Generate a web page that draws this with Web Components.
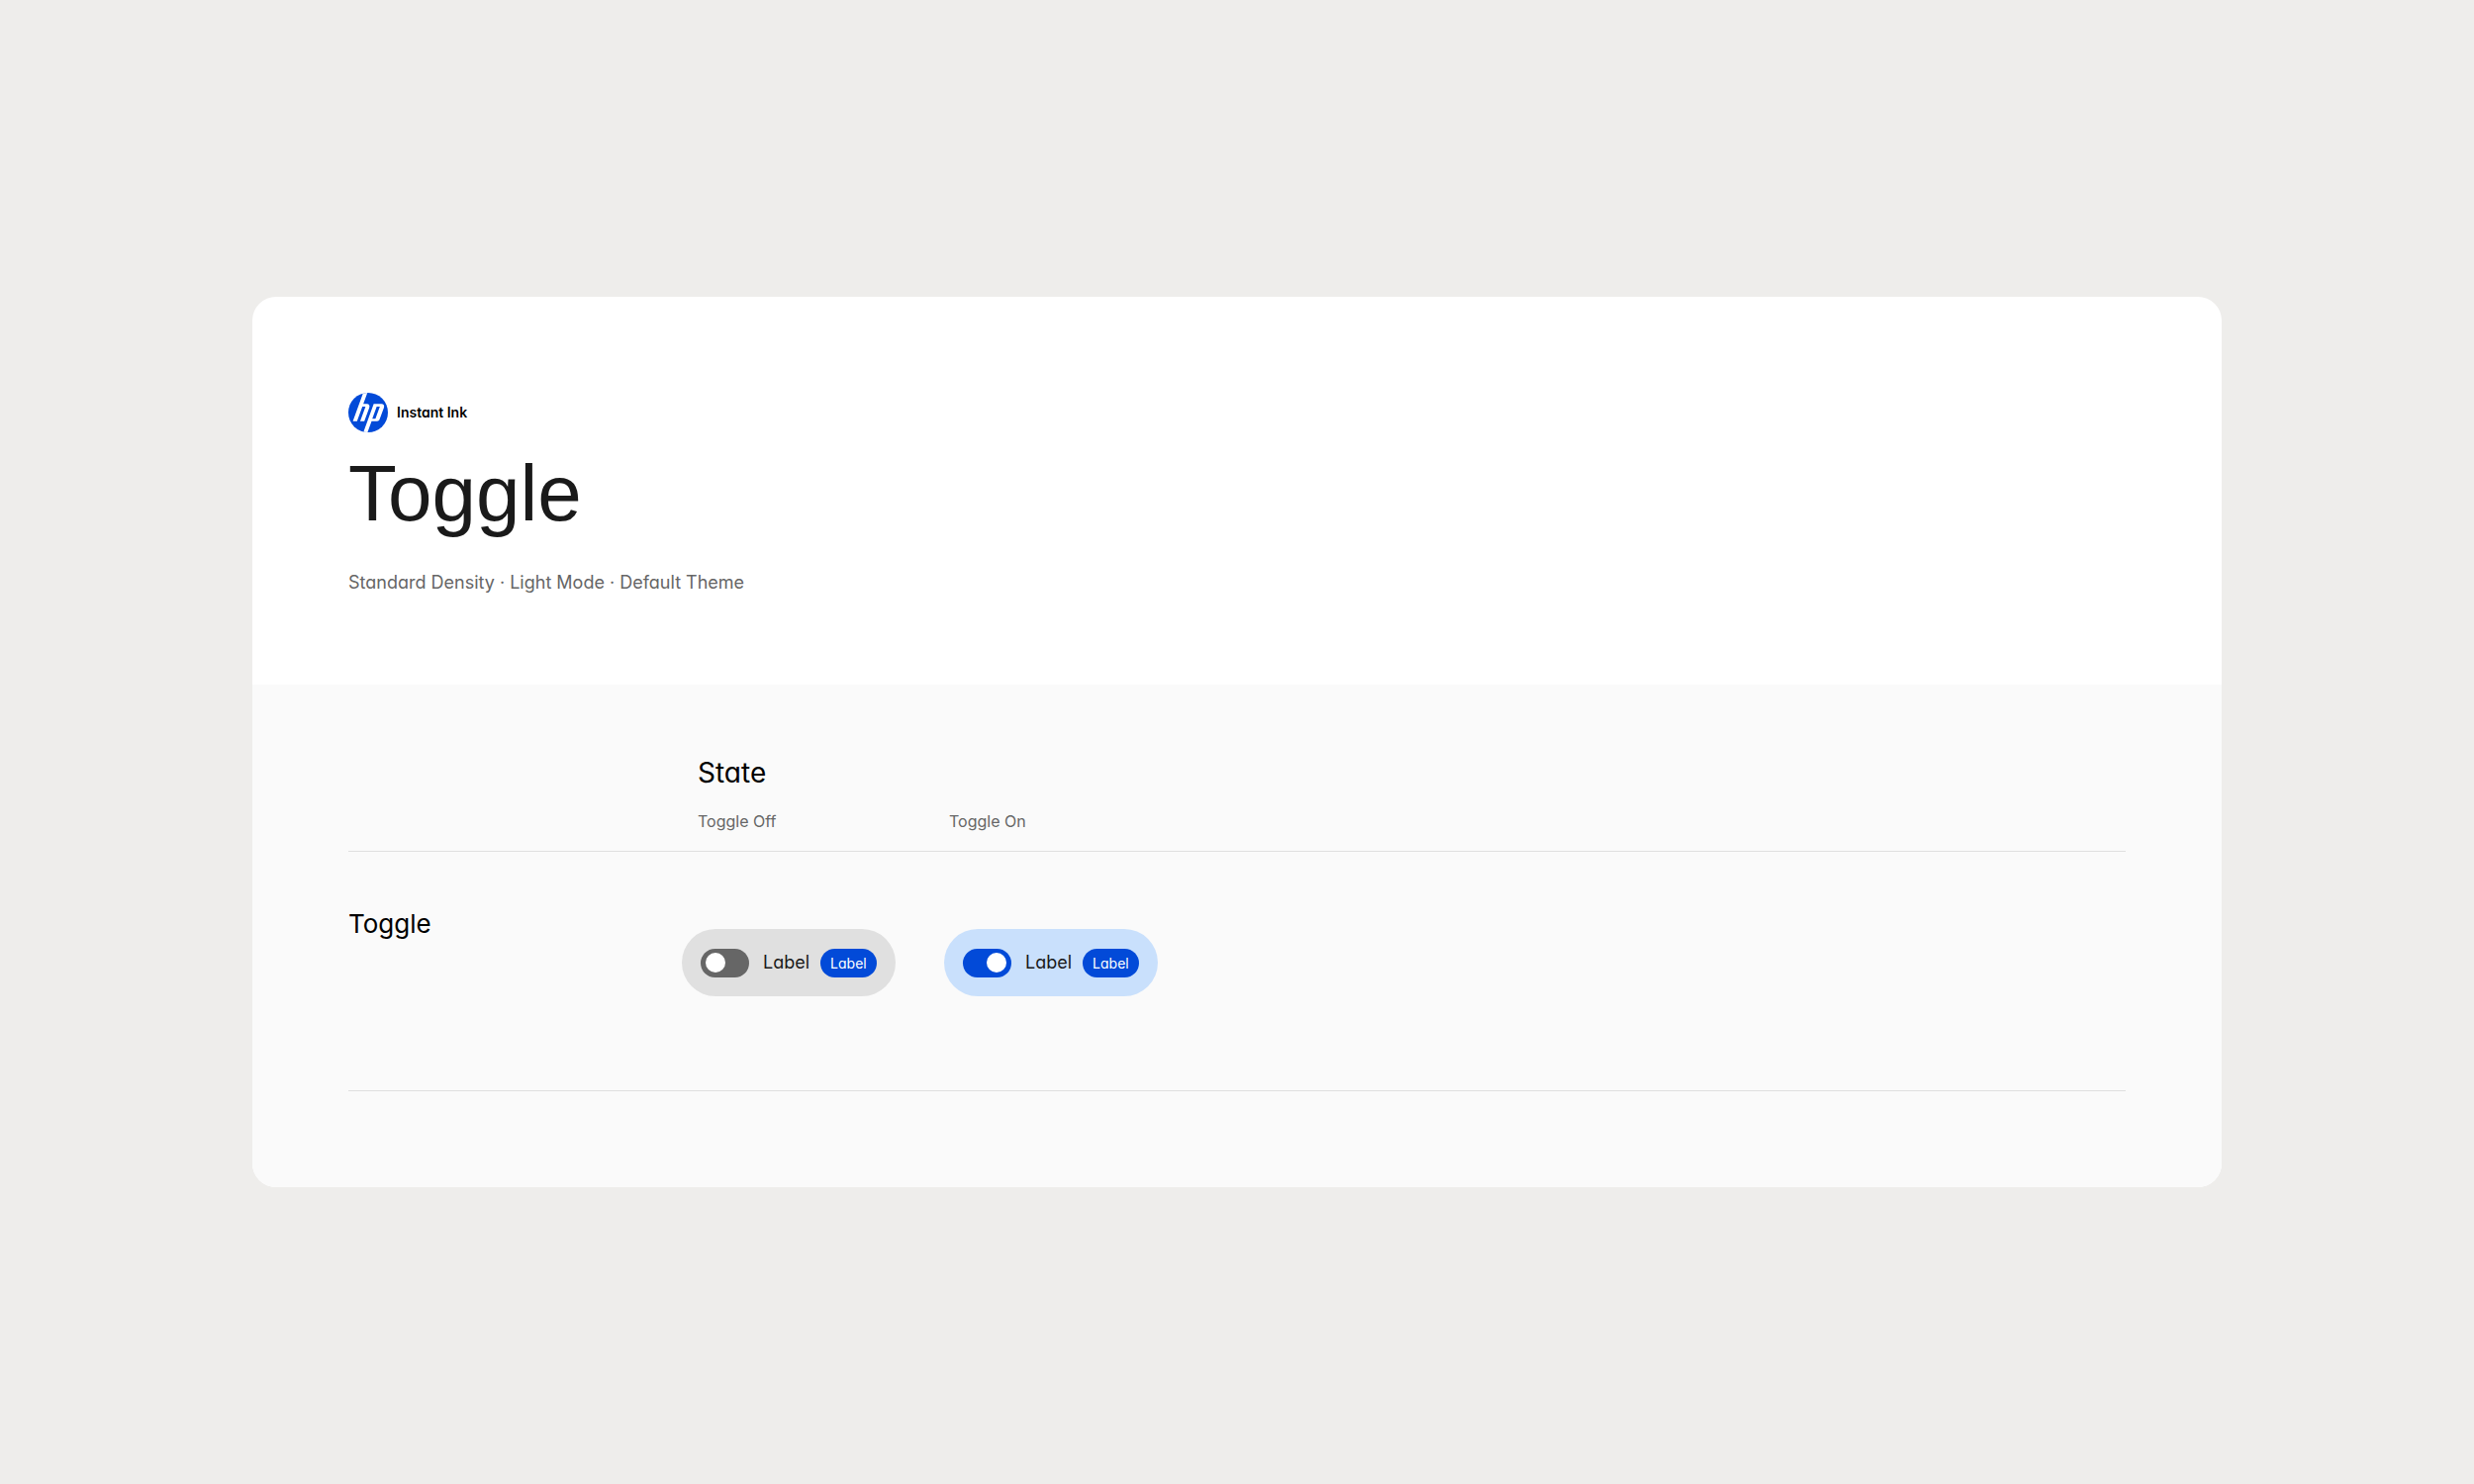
<!DOCTYPE html>
<html lang="en">
<head>
<meta charset="utf-8">
<title>Toggle</title>
<style>
  body { margin: 0; background: #eeedeb; }
</style>
</head>
<body>
<spec-page>
  <spec-header>
    <brand-mark slot="brand">Instant Ink</brand-mark>
    <span slot="title">Toggle</span>
    <span slot="meta">Standard Density · Light Mode · Default Theme</span>
  </spec-header>
  <state-table>
    <span slot="group">State</span>
    <span slot="off-name">Toggle Off</span>
    <span slot="on-name">Toggle On</span>
    <span slot="row-name">Toggle</span>
    <toggle-chip slot="off">Label<span slot="badge">Label</span></toggle-chip>
    <toggle-chip slot="on" checked>Label<span slot="badge">Label</span></toggle-chip>
  </state-table>
</spec-page>

<script>
const define = (name, html, setup) => {
  const template = document.createElement('template');
  template.innerHTML = html;
  customElements.define(name, class extends HTMLElement {
    constructor() {
      super();
      this.attachShadow({ mode: 'open' }).append(template.content.cloneNode(true));
    }
    connectedCallback() { if (setup) setup(this); }
  });
};

define('spec-page', `
  <style>
    :host {
      --ink: #1a1a1a; --muted: #666; --line: #e0e0e0; --blue: #024ad8;
      display: flex; align-items: center; box-sizing: border-box;
      min-height: 100vh; padding: 48px 10.2%;
      font-family: Inter, "Liberation Sans", sans-serif;
      font-feature-settings: "cv11"; color: var(--ink);
    }
    main { flex: 1; min-width: 0; border-radius: 24px; overflow: hidden; background: #fff; }
  </style>
  <main><slot></slot></main>`);

define('spec-header', `
  <style>
    :host { display: block; padding: 97px 97px 87px; }
    header { display: flex; flex-direction: column; align-items: flex-start; }
    h1 { margin: 14px 0 26px; font: 400 80px/96px "Liberation Sans", sans-serif; }
    p { margin: 0; font-size: 18px; line-height: 32px; color: var(--muted); }
  </style>
  <header>
    <slot name="brand"></slot>
    <h1><slot name="title"></slot></h1>
    <p><slot name="meta"></slot></p>
  </header>`);

define('brand-mark', `
  <style>
    :host { display: flex; align-items: center; gap: 9px; color: #000; font-size: 14px; line-height: 20px; font-weight: 600; }
    svg { display: block; width: 40px; height: 40px; }
  </style>
  <svg viewBox="0 0 24 24" aria-hidden="true">
    <defs><clipPath id="disc"><circle cx="12" cy="12" r="12"/></clipPath></defs>
    <circle cx="12" cy="12" r="12" fill="#024ad8"/>
    <g fill="#fff" clip-path="url(#disc)">
      <path d="M9.02 0 2.74 17.25h2.53L8.52 8.33h1.9L7.17 17.25H9.7l3.03-8.32c.44-1.2-.24-2.17-1.52-2.17H9.09L11.55 0z"/>
      <path fill-rule="evenodd" d="M15.38 6.76h4.68c1.28 0 1.97.97 1.53 2.17l-2.67 7.3c-.2.57-.85 1.02-1.44 1.02H14.1L11.64 24H9.11zM17.2 8.33l-2.68 7.36h1.9L19.1 8.33z"/>
    </g>
  </svg>
  <slot></slot>`);

define('state-table', `
  <style>
    :host { display: block; padding: 69px 97px 97px; background: #fafafa; }
    table { width: 100%; border-spacing: 0; table-layout: fixed; }
    th, td { padding: 0; text-align: left; vertical-align: top; font-weight: 400; }
    .names { width: 337px; }
    .state { width: 265px; }
    .group { padding: 0 0 17px 16px; font-size: 28px; line-height: 40px; color: #000; }
    .name { padding: 0 0 18px 16px; font-size: 16px; line-height: 24px; color: var(--muted); }
    .name + .name { padding-left: 5px; }
    .row { padding-top: 55px; font-size: 26px; line-height: 36px; color: #000; }
    .cell { padding: 78px 0 95px; }
    thead tr:last-child > *, tbody tr > * { border-bottom: 1px solid var(--line); }
  </style>
  <table>
    <colgroup><col class="names"><col class="state"><col class="state"><col></colgroup>
    <thead>
      <tr><td></td><th class="group" colspan="3" scope="colgroup"><slot name="group"></slot></th></tr>
      <tr>
        <td></td>
        <th class="name" scope="col"><slot name="off-name"></slot></th>
        <th class="name" scope="col"><slot name="on-name"></slot></th>
        <td></td>
      </tr>
    </thead>
    <tbody>
      <tr>
        <th class="row" scope="row"><slot name="row-name"></slot></th>
        <td class="cell"><slot name="off"></slot></td>
        <td class="cell"><slot name="on"></slot></td>
        <td></td>
      </tr>
    </tbody>
  </table>`);

define('toggle-chip', `
  <style>
    :host { display: inline-flex; vertical-align: top; }
    label {
      display: flex; align-items: center; box-sizing: border-box; height: 68px;
      padding: 0 19px; border-radius: 34px; background: #e0e0e0; cursor: pointer;
    }
    label:has(input:checked) { background: #c9e0fc; }
    input {
      appearance: none; display: flex; align-items: center; box-sizing: border-box;
      width: 49px; height: 29px; margin: 0; padding: 0 5px; border-radius: 15px; background: #666; cursor: inherit;
    }
    input::before { content: ""; width: 20px; height: 20px; border-radius: 50%; background: #fff; }
    input:checked { justify-content: flex-end; background: var(--blue); }
    .text { margin: 0 11px 0 14px; font-size: 18px; line-height: 28px; }
    .badge {
      padding: 0 10px; border-radius: 15px; background: var(--blue); color: #fff;
      font-size: 14px; line-height: 29px;
    }
  </style>
  <label>
    <input type="checkbox" role="switch">
    <span class="text"><slot></slot></span>
    <span class="badge"><slot name="badge"></slot></span>
  </label>`,
  el => { el.shadowRoot.querySelector('input').checked = el.hasAttribute('checked'); });
</script>
</body>
</html>
